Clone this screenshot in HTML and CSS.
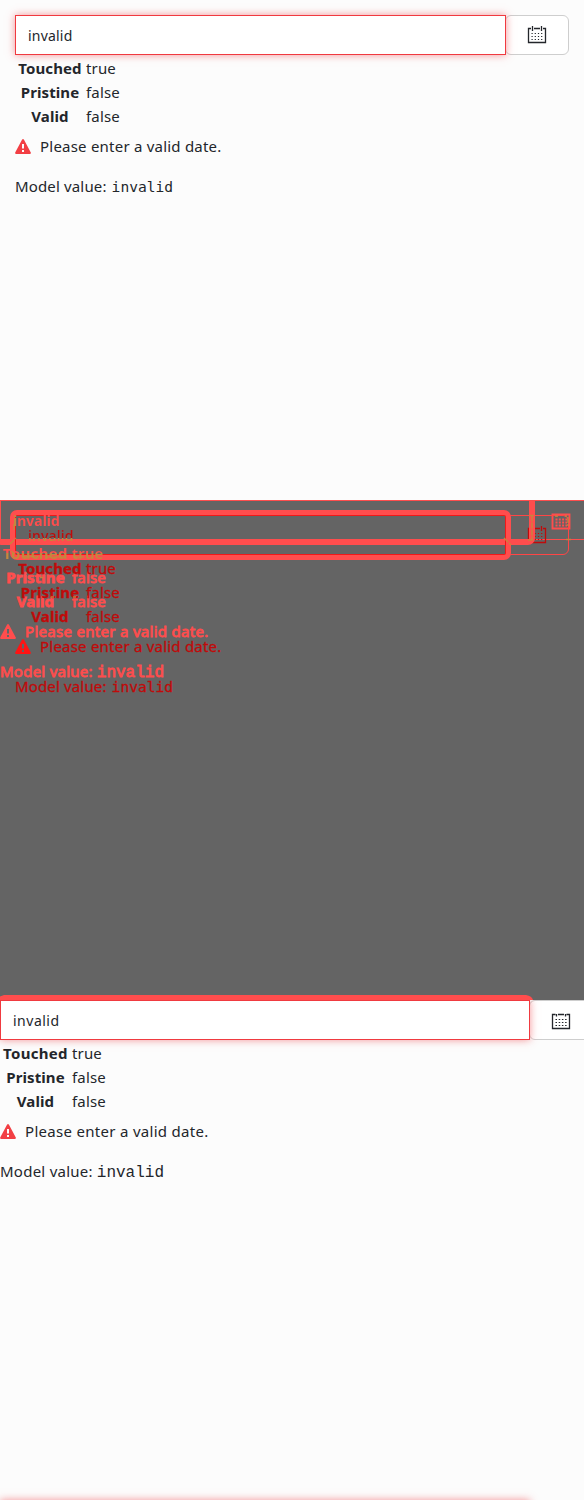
FILE: index.html
```
<!DOCTYPE html>
<html lang="en">
<head>
<meta charset="utf-8">
<title>Date input comparison</title>
<link rel="stylesheet" href="styles.css">
</head>
<body>
<svg class="defs" width="0" height="0">
  <symbol id="calendar" viewBox="0 0 20 18">
    <path d="M4 2.500H1.500V16.500H18.500V2.500H16M7 2.500H13M5.500 0V5M14.500 0V5" fill="none" stroke="currentColor" stroke-width="1.300"/>
    <path d="M4.500 7.500H16M4.500 10.500H16M4.500 13.500H16" fill="none" stroke="currentColor" stroke-width="1.100" stroke-dasharray="1.200 2"/>
  </symbol>
  <symbol id="calendar-flat" viewBox="0 0 20 18">
    <path d="M4.500 2.500H1.500V16.500H18.500V2.500H15.500M7 2.500H13M5.500 2V4.500M14.500 2V4.500" fill="none" stroke="currentColor" stroke-width="1.300"/>
    <path d="M4.500 7.500H16M4.500 10.500H16M4.500 13.500H16" fill="none" stroke="currentColor" stroke-width="1.200" stroke-dasharray="1.500 1.700"/>
  </symbol>
  <symbol id="calendar-bold" viewBox="0 0 20 18">
    <path d="M1.500 2.500H18.500V16.500H1.500ZM5.500 2V4.500M14.500 2V4.500" fill="none" stroke="currentColor" stroke-width="1.900"/>
    <path d="M4.500 7.500H16M4.500 10.500H16M4.500 13.500H16" fill="none" stroke="currentColor" stroke-width="1.800" stroke-dasharray="2 1.300"/>
  </symbol>
  <symbol id="warning" viewBox="0 0 16 15">
    <path fill-rule="evenodd" d="M7 .7Q8-.5 9 .7L15.800 13.400Q16.200 15 14.800 15H1.200Q-.2 15 .2 13.400ZM7 5V9.500H9V5ZM7 11V13H9V11Z" fill="currentColor"/>
  </symbol>
</svg>
<main class="sheet">
  <section class="panel">
    <div class="form form-expected">
      <div class="field"><div class="input"><span>invalid</span></div><div class="button"><svg class="cal"><use href="#calendar"/></svg></div></div>
      <table class="state"><tr><th>Touched</th><td>true</td></tr><tr><th>Pristine</th><td>false</td></tr><tr><th>Valid</th><td>false</td></tr></table>
      <div class="error"><svg class="warn"><use href="#warning"/></svg><span>Please enter a valid date.</span></div>
      <div class="model"><span>Model value:</span><code>invalid</code></div>
    </div>
  </section>
  <section class="panel panel-diff">
    <div class="form form-actual ghost ghost-light">
      <div class="field"><div class="input"></div><div class="button"><svg class="cal"><use href="#calendar-bold"/></svg></div><span class="value">invalid</span></div>
      <table class="state"><tr class="crossed"><th>Touched</th><td>true</td></tr><tr><th>Pristine</th><td>false</td></tr><tr><th>Valid</th><td>false</td></tr></table>
      <div class="error"><svg class="warn"><use href="#warning"/></svg><span>Please enter a valid date.</span></div>
      <div class="model"><span>Model value:</span><code>invalid</code></div>
    </div>
    <div class="form form-expected ghost ghost-dark">
      <div class="field"><div class="input"><span>invalid</span></div><div class="button"><svg class="cal"><use href="#calendar"/></svg></div></div>
      <table class="state"><tr><th>Touched</th><td>true</td></tr><tr><th>Pristine</th><td>false</td></tr><tr><th>Valid</th><td>false</td></tr></table>
      <div class="error"><svg class="warn"><use href="#warning"/></svg><span>Please enter a valid date.</span></div>
      <div class="model"><span>Model value:</span><code>invalid</code></div>
    </div>
    <svg class="marks" viewBox="0 0 584 500">
      <path d="M0 .5H584" stroke="#ff4d4d"/>
      <path d="M0 500V496.500L4 495H526Q532 496 533 500Z" fill="#ff4d4d"/>
      <g fill="none" stroke="#c4883d" stroke-width="1.500" opacity=".9">
        <path d="M10 44L16 38M11 51L15 54M504 38L511 45M14 24V30M22 56.500H39M46 57H65M73 57H84M40 77.500H43M51 97H54M73 97H76M532 15.500V40M529 15.500H534M528 40H533M566 39.500H571M568 17V26M555 16H558M565 16H567" stroke-dasharray="6 1"/>
      </g>
    </svg>
  </section>
  <section class="panel">
    <div class="form form-actual">
      <div class="field"><div class="input"><span>invalid</span></div><div class="button"><svg class="cal"><use href="#calendar-flat"/></svg></div></div>
      <table class="state"><tr><th>Touched</th><td>true</td></tr><tr><th>Pristine</th><td>false</td></tr><tr><th>Valid</th><td>false</td></tr></table>
      <div class="error"><svg class="warn"><use href="#warning"/></svg><span>Please enter a valid date.</span></div>
      <div class="model"><span>Model value:</span><code>invalid</code></div>
    </div>
    <div class="next-edge"></div>
  </section>
</main>
</body>
</html>
```
FILE: styles.css
```
* { box-sizing: border-box; }
body { margin: 0; }
.defs { position: absolute; }
.sheet {
  width: 584px;
  height: 1500px;
  overflow: hidden;
  font: 15px/24px "Noto Sans", sans-serif;
  color: #23262b;
}
.panel { position: relative; height: 500px; overflow: hidden; background: #fcfcfc; }
.panel-diff { background: #646464; }
.form { width: 584px; }
.form-expected { padding: 15px; }
.form-actual { width: 599px; }

.field { position: relative; display: flex; height: 40px; }
.input {
  position: relative;
  z-index: 1;
  width: 491px;
  padding: 9px 12px;
  line-height: 22px;
  font-size: 14px;
  letter-spacing: .2px;
  border: 1px solid #f03a40;
  background: #fff;
  box-shadow: 0 0 8px rgba(238, 64, 69, .55);
}
.form-actual .input { width: 530px; letter-spacing: .5px; }
.button {
  display: flex;
  align-items: center;
  justify-content: center;
  width: 64px;
  margin-left: -1px;
  border: 1px solid #cecece;
  border-radius: 6px;
  background: #fff;
}
.form-actual .button { width: 63px; }
.cal { width: 20px; height: 18px; }
.form-actual .cal { margin-top: 2px; }

.state { margin: 1px 0 0 2px; border-spacing: 0; letter-spacing: .15px; }
.state th { width: 66px; padding: 0; text-align: center; font-weight: 700; letter-spacing: .1px; }
.state td { padding: 0 0 0 3px; }
.form-actual .state { margin-left: 2px; }
.form-actual .state th { width: 67px; }
.form-actual .state tr:first-child th { letter-spacing: .3px; }

.error { display: flex; align-items: center; gap: 9px; margin-top: 6px; height: 24px; letter-spacing: .22px; }
.form-actual .error { letter-spacing: .3px; }
.warn { width: 16px; height: 15px; color: #f23f44; }
.model { display: flex; align-items: baseline; gap: 5px; margin-top: 16px; letter-spacing: .15px; }
.form-actual .model { gap: 4px; letter-spacing: .25px; }
.model code { font: 14.6px/24px "DejaVu Sans Mono", monospace; letter-spacing: 0; }
.form-actual code { font: 16px/24px "Liberation Mono", monospace; letter-spacing: 0; }

.ghost { position: absolute; top: 0; left: 0; }
.ghost .input, .ghost .button { background: transparent; }
.ghost .input { box-shadow: none; }
.ghost .input::before {
  content: "";
  position: absolute;
  inset: -6px;
  border: 5px solid #ff4d4d;
  border-radius: 7px;
}
.ghost-light, .ghost-light .warn { color: #ff4d4d; }
.ghost-light { -webkit-text-stroke: .8px #ff4d4d; }
.ghost-light .input { border-color: #ff4d4d; }
.ghost-light .button { border-color: #ff4d4d; }
.ghost-light .value {
  position: absolute;
  z-index: 2;
  left: 13px;
  top: 10px;
  font-size: 14px;
  line-height: 22px;
  letter-spacing: 0;
  -webkit-text-stroke: 0;
  font-weight: 700;
  color: transparent;
  background: linear-gradient(to right, #c4883d 3px, #ff4d4d 3px);
  background-clip: text;
}
.ghost-light .crossed th, .ghost-light .crossed td {
  position: relative;
  z-index: 2;
  color: transparent;
  -webkit-text-stroke: 0;
  background: linear-gradient(#ff4d4d 12px, #c4883d 12px);
  background-clip: text;
}
.ghost-light .crossed td { font-weight: 600; }
.ghost-dark { color: #c00a0a; -webkit-text-stroke: .3px #c00a0a; }
.ghost-dark .warn { color: #ff1414; }
.ghost-dark .input { border-color: #ef1919; }
.ghost-dark .input span {
  position: relative;
  z-index: 2;
  color: transparent;
  -webkit-text-stroke: 0;
  font-weight: 500;
  background: linear-gradient(#c00a0a 12px, #c4883d 12px);
  background-clip: text;
}
.ghost-dark .button { border-color: #ff4545; }
.marks { position: absolute; z-index: 3; inset: 0; width: 584px; height: 500px; }
.next-edge {
  position: absolute;
  top: 500px;
  left: 0;
  width: 530px;
  height: 40px;
  box-shadow: 0 0 8px rgba(238, 64, 69, .55);
}
```
